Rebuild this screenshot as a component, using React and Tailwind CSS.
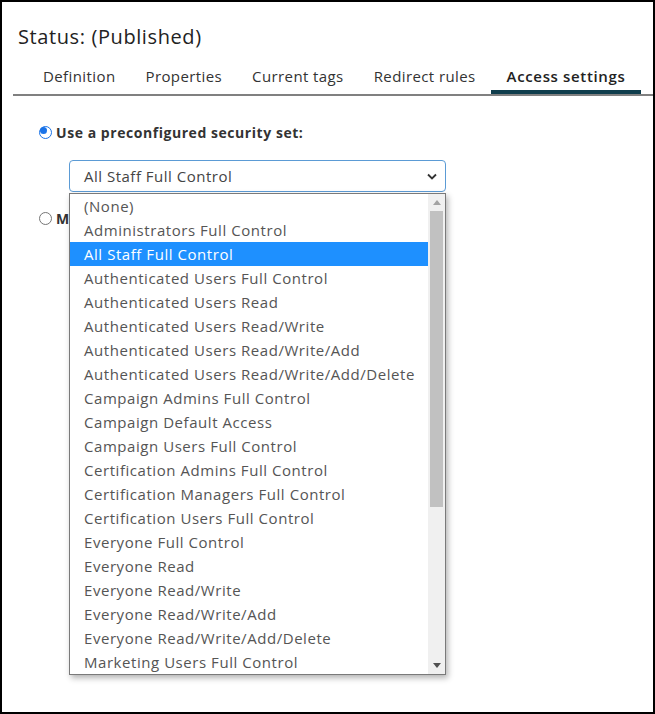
import { useState } from "react";

const tabs = ["Definition", "Properties", "Current tags", "Redirect rules", "Access settings"];

const securitySets = [
  "(None)",
  "Administrators Full Control",
  "All Staff Full Control",
  "Authenticated Users Full Control",
  "Authenticated Users Read",
  "Authenticated Users Read/Write",
  "Authenticated Users Read/Write/Add",
  "Authenticated Users Read/Write/Add/Delete",
  "Campaign Admins Full Control",
  "Campaign Default Access",
  "Campaign Users Full Control",
  "Certification Admins Full Control",
  "Certification Managers Full Control",
  "Certification Users Full Control",
  "Everyone Full Control",
  "Everyone Read",
  "Everyone Read/Write",
  "Everyone Read/Write/Add",
  "Everyone Read/Write/Add/Delete",
  "Marketing Users Full Control",
];

function Radio({ checked }) {
  return (
    <span
      className={`inline-block w-[13px] h-[13px] rounded-full border shrink-0 bg-white ${
        checked ? "border-[#1a73e8] flex items-center justify-center" : "border-[#767676]"
      }`}
    >
      {checked && <span className="block w-[7px] h-[7px] rounded-full bg-[#1a73e8]" />}
    </span>
  );
}

export default function App() {
  const [active] = useState("Access settings");
  const [selected] = useState("All Staff Full Control");

  return (
    <div
      className="w-[655px] h-[714px] border-2 border-black bg-white text-[#222] overflow-hidden"
      style={{ fontFamily: "'Open Sans', 'Liberation Sans', sans-serif" }}
    >
      <h1 className="pl-4 pt-[21px] text-[20px] leading-[28px] tracking-[0.6px] text-[#222]">Status: (Published)</h1>

      {/* tab strip */}
      <div className="ml-[11px] mt-[8px] border-b-2 border-[#808080]">
        <div className="flex pl-[15px]">
          {tabs.map((t) => (
            <div
              key={t}
              className={`h-[35px] flex items-center text-[15px] ${
                t === active
                  ? "px-[16px] font-semibold tracking-[0.65px] border-b-4 border-[#0f3d4c] pt-1 text-[#222]"
                  : "px-[15px] tracking-[0.4px] text-[#333]"
              }`}
            >
              {t}
            </div>
          ))}
        </div>
      </div>

      <div className="pl-[37px] pt-[26px]">
        <label className="flex items-center gap-[4px] text-[14px] font-bold tracking-[0.55px] text-[#333]">
          <Radio checked />
          Use a preconfigured security set:
        </label>

        <div className="relative ml-[30px] mt-[17px] w-[377px]">
          <div className="h-[32px] rounded-[4px] border border-[#5b9bd5] flex items-center justify-between pl-[14px] pr-[8px] text-[15px] tracking-[0.5px] text-[#444]">
            <span>{selected}</span>
            <svg width="10" height="7" viewBox="0 0 10 7">
              <path d="M1 1.5 L5 5.5 L9 1.5" fill="none" stroke="#333" strokeWidth="1.8" />
            </svg>
          </div>

          {/* open option list */}
          <div className="absolute left-0 top-[33px] w-[377px] h-[482px] bg-white border border-[#7a7a7a] shadow-[2px_3px_6px_rgba(0,0,0,0.3)] flex z-10">
            <ul className="flex-1">
              {securitySets.map((s) => (
                <li
                  key={s}
                  className={`h-[24px] leading-[24px] pl-[14px] text-[15px] tracking-[0.55px] whitespace-nowrap ${
                    s === selected ? "bg-[#1e90ff] text-white" : "text-[#555]"
                  }`}
                >
                  {s}
                </li>
              ))}
            </ul>
            <div className="w-[17px] bg-[#f0f0f0] flex flex-col items-center">
              <div className="h-[17px] flex items-center justify-center">
                <svg width="8" height="5" viewBox="0 0 8 5">
                  <path d="M0 5 L4 0 L8 5 Z" fill="#a3a3a3" />
                </svg>
              </div>
              <div className="w-[13px] h-[296px] bg-[#c1c1c1]" />
              <div className="flex-1" />
              <div className="h-[17px] flex items-center justify-center">
                <svg width="8" height="5" viewBox="0 0 8 5">
                  <path d="M0 0 L8 0 L4 5 Z" fill="#505050" />
                </svg>
              </div>
            </div>
          </div>
        </div>

        {/* second option, mostly covered by the open list */}
        <label className="flex items-center gap-[4px] mt-[16px] text-[14px] font-bold tracking-[0.55px] text-[#333] whitespace-nowrap">
          <Radio />
          Manually set access rights:
        </label>
      </div>
    </div>
  );
}
